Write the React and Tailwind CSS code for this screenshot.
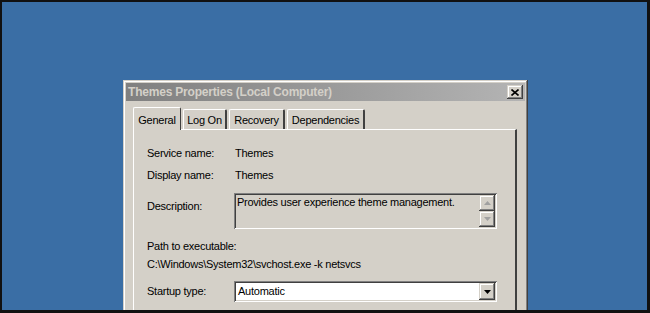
import React from 'react';

const raised =
  'shadow-[inset_-1px_-1px_#404040,inset_1px_1px_#d4d0c8,inset_-2px_-2px_#808080,inset_2px_2px_#ffffff]';
const sunken =
  'shadow-[inset_1px_1px_#808080,inset_-1px_-1px_#ffffff,inset_2px_2px_#404040,inset_-2px_-2px_#d4d0c8]';

const Field = ({ label, children }) => (
  <div className="flex items-center h-[22px]">
    <div className="w-[88px]">{label}</div>
    <div>{children}</div>
  </div>
);

const ScrollBtn = ({ up }) => (
  <div className={`w-[16px] h-[16px] bg-[#d4d0c8] flex items-center justify-center ${raised}`}>
    <svg width="7" height="4" viewBox="0 0 7 4">
      <path d={up ? 'M3.5 0L7 4H0z' : 'M0 0h7L3.5 4z'} fill="#a0a0a0" />
    </svg>
  </div>
);

const tabs = [
  { name: 'General', w: 'w-[48px]' },
  { name: 'Log On', w: 'w-[44px]' },
  { name: 'Recovery', w: 'w-[56px]' },
  { name: 'Dependencies', w: 'w-[78px]' },
];

const App = () => {
  return (
    <div
      className="w-[650px] h-[313px] overflow-hidden bg-[#3a6ea5] border-t-2 border-l-2 border-r-[3px] border-b-[3px] border-[#111]"
      style={{ fontFamily: '"Liberation Sans", Arial, sans-serif' }}
    >
      <div className="pl-[121px] pt-[78px]">
        <div className={`w-[405px] h-[260px] bg-[#d4d0c8] p-[3px] ${raised}`}>
          {/* title bar */}
          <div className="h-[18px] flex items-center justify-between pl-[2px] pr-[2px] bg-gradient-to-r from-[#808080] to-[#b4b4b4]">
            <span className="text-[12px] font-bold text-[#d4d0c8] tracking-[-0.2px]">
              Themes Properties (Local Computer)
            </span>
            <div className={`w-[16px] h-[14px] bg-[#d4d0c8] flex items-center justify-center ${raised}`}>
              <svg width="8" height="7" viewBox="0 0 8 7">
                <path d="M0.5 0.5L7.5 6.5M7.5 0.5L0.5 6.5" stroke="#000" strokeWidth="1.6" />
              </svg>
            </div>
          </div>

          {/* tabs */}
          <div className="pl-[7px] pr-[8px] pt-[5px] text-[11px] tracking-[-0.25px] text-black">
            <div className="flex items-end h-[23px] relative z-10">
              {tabs.map((t, i) =>
                i === 0 ? (
                  <div
                    key={t.name}
                    className={`${t.w} h-[23px] pt-[4px] text-center bg-[#d4d0c8] border-t border-l border-white border-r border-r-[#404040] rounded-t-[2px] -mb-[1px]`}
                  >
                    {t.name}
                  </div>
                ) : (
                  <div
                    key={t.name}
                    className={`${t.w} h-[20px] pt-[2px] text-center ml-[2px] border-t border-l border-white border-r-2 border-r-[#404040] rounded-t-[2px]`}
                  >
                    {t.name}
                  </div>
                )
              )}
            </div>
            <div className="border-t border-l border-white border-r-2 border-r-[#404040] h-[200px] pl-[13px] pt-[12px]">
              <Field label="Service name:">Themes</Field>
              <Field label="Display name:">Themes</Field>
              <div className="flex items-start mt-[7px]">
                <div className="w-[87px] pt-[5px]">Description:</div>
                <div className={`w-[263px] h-[36px] bg-[#d4d0c8] flex justify-between p-[2px] ${sunken}`}>
                  <div className="pl-[1px] leading-[14px]">
                    Provides user experience theme management.
                  </div>
                  <div className="flex flex-col">
                    <ScrollBtn up />
                    <ScrollBtn />
                  </div>
                </div>
              </div>
              <div className="mt-[8px] leading-[18px]">
                <div>Path to executable:</div>
                <div>C:\Windows\System32\svchost.exe -k netsvcs</div>
              </div>
              <div className="flex items-center mt-[8px]">
                <div className="w-[87px]">Startup type:</div>
                <div className={`w-[263px] h-[21px] bg-white flex items-center justify-between p-[2px] ${sunken}`}>
                  <span className="pl-[2px]">Automatic</span>
                  <div className={`w-[16px] h-[17px] bg-[#d4d0c8] flex items-center justify-center ${raised}`}>
                    <svg width="7" height="4" viewBox="0 0 7 4">
                      <path d="M0 0h7L3.5 4z" fill="#000" />
                    </svg>
                  </div>
                </div>
              </div>
            </div>
          </div>
        </div>
      </div>
    </div>
  );
};

export default App;
